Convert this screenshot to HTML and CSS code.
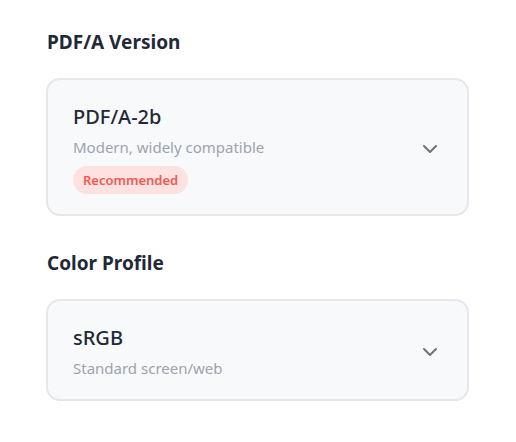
FILE: index.html
```html
<!DOCTYPE html>
<html>
<head>
    <title>PDF/A Settings</title>
    <link rel="stylesheet" href="styles.css">
</head>
<body>
    <div class="settings">
        <div class="section">
            <h2 class="section-title">PDF/A Version</h2>
            <div class="select-card">
                <div class="select-info">
                    <div class="select-name">PDF/A-2b</div>
                    <div class="select-desc">Modern, widely compatible</div>
                    <span class="badge">Recommended</span>
                </div>
                <svg class="chevron" width="16" height="10" viewBox="0 0 16 10">
                    <polyline points="2,2 8,8 14,2" fill="none" stroke="#6b7280" stroke-width="2" stroke-linecap="round" stroke-linejoin="round"/>
                </svg>
            </div>
        </div>

        <div class="section">
            <h2 class="section-title">Color Profile</h2>
            <div class="select-card">
                <div class="select-info">
                    <div class="select-name">sRGB</div>
                    <div class="select-desc">Standard screen/web</div>
                </div>
                <svg class="chevron" width="16" height="10" viewBox="0 0 16 10">
                    <polyline points="2,2 8,8 14,2" fill="none" stroke="#6b7280" stroke-width="2" stroke-linecap="round" stroke-linejoin="round"/>
                </svg>
            </div>
        </div>
    </div>
</body>
</html>
```

FILE: styles.css
```css
body {
    background-color: #fff;
    font-family: "Noto Sans", Arial, sans-serif;
    margin: 0;
    padding: 0;
}

.settings {
    width: 423px;
    padding: 28px 0 0 46px;
    display: flex;
    flex-direction: column;
    gap: 33px;
}

.section-title {
    margin: 0 0 22px 1px;
    font-size: 19px;
    line-height: 28px;
    font-weight: 700;
    color: #1f2937;
}

.select-card {
    display: flex;
    align-items: center;
    justify-content: space-between;
    background-color: #f8f9fb;
    border: 2px solid #e5e7eb;
    border-radius: 14px;
    padding: 24px 29px 20px 25px;
}

.select-info {
    display: flex;
    flex-direction: column;
    align-items: flex-start;
}

.select-name {
    font-size: 20px;
    line-height: 26px;
    font-weight: 500;
    color: #1f2937;
}

.select-desc {
    margin-top: 6px;
    font-size: 15px;
    line-height: 22px;
    color: #9ca3af;
}

.badge {
    margin-top: 8px;
    padding: 3px 10px;
    border-radius: 14px;
    background-color: #fee2e2;
    color: #f05a52;
    font-size: 13px;
    line-height: 22px;
    font-weight: 600;
}

.chevron {
    flex-shrink: 0;
}
```
